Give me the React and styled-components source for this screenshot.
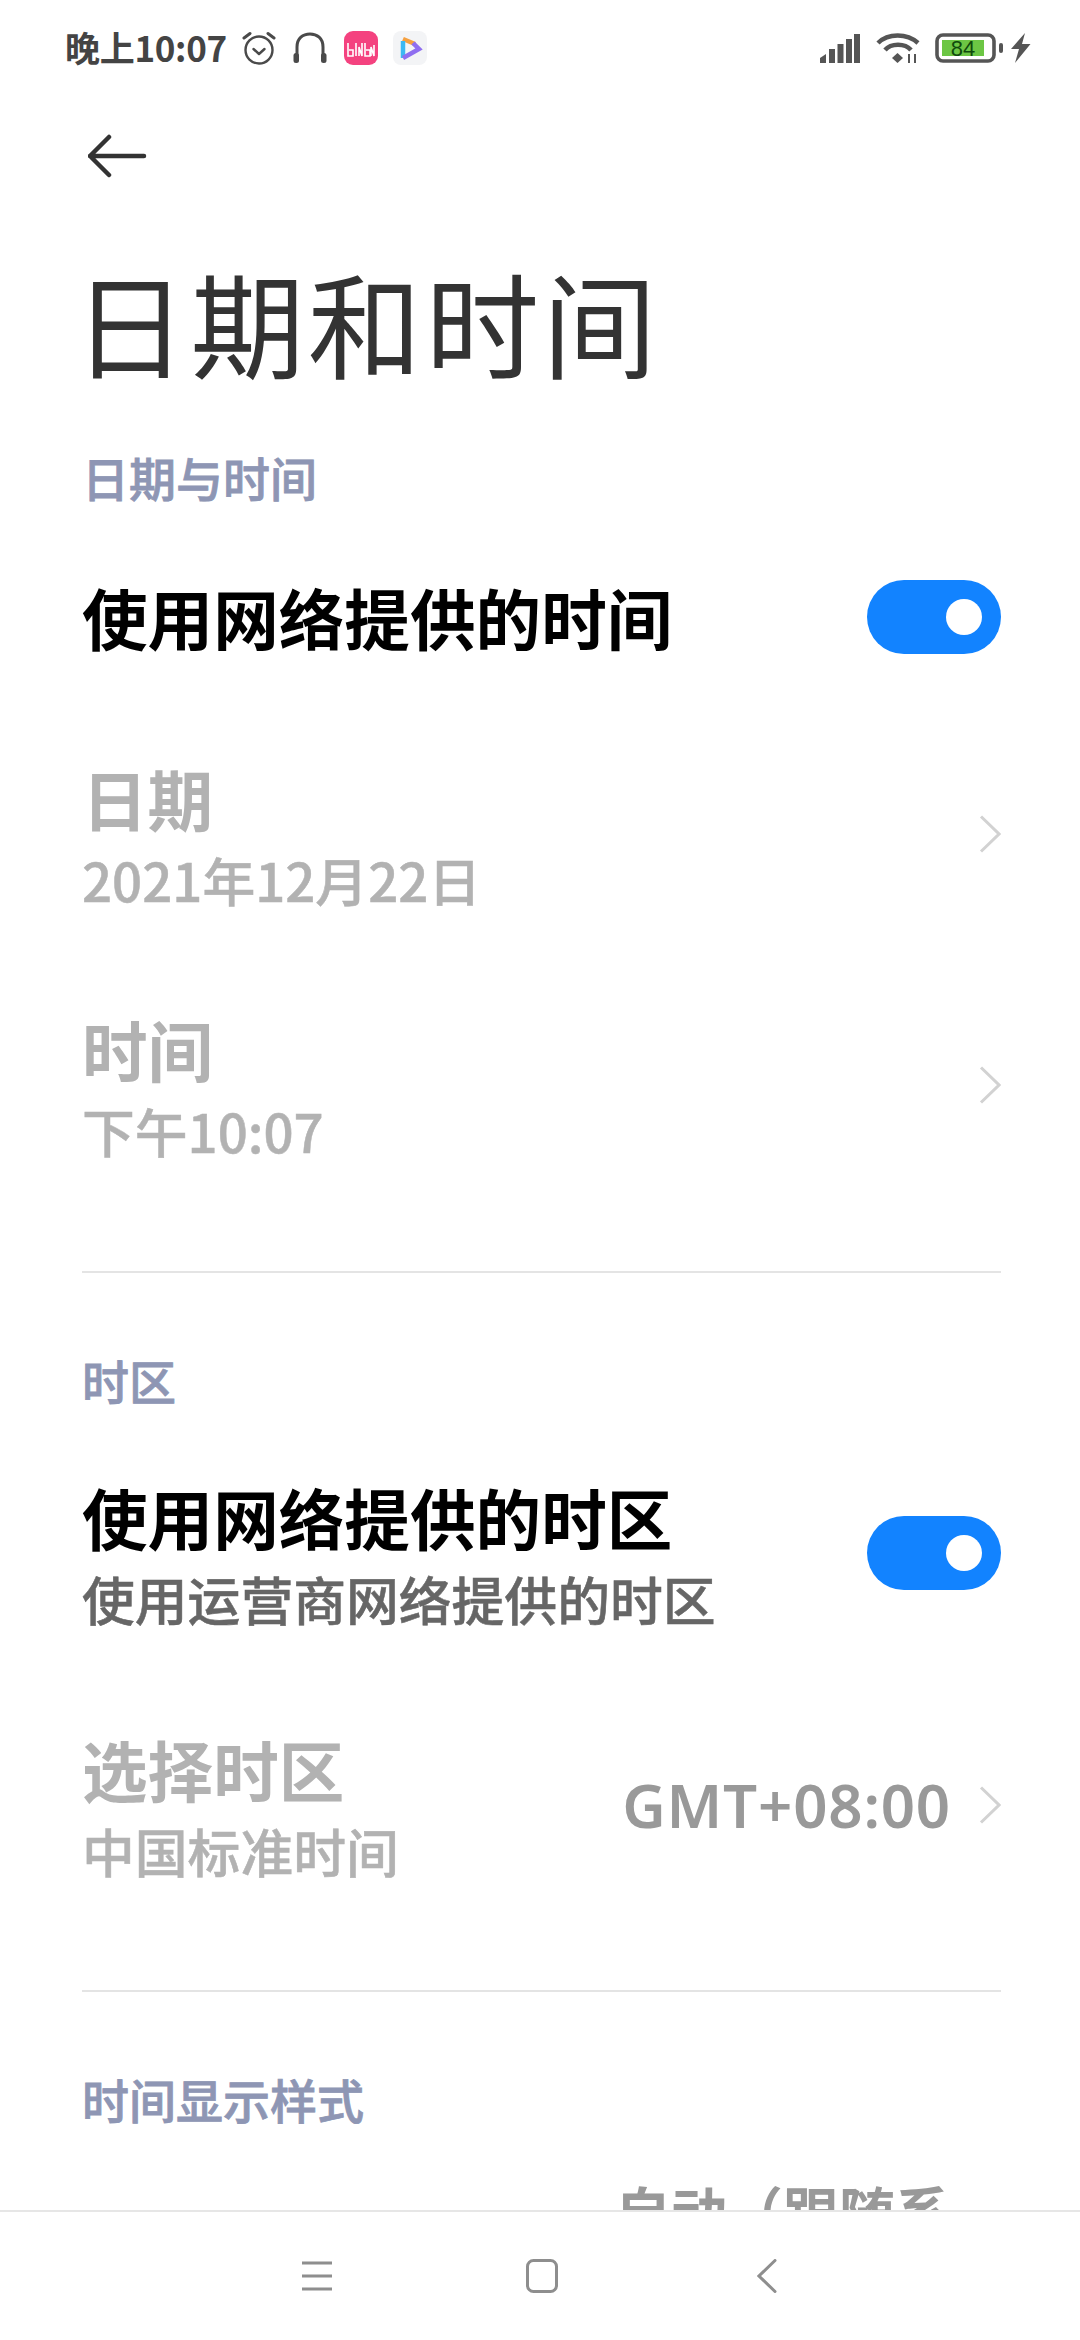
import React from "react";
import styled, { createGlobalStyle } from "styled-components";

const Global = createGlobalStyle`
  html, body { margin: 0; padding: 0; background: #fff; }
  body { font-family: "Noto Sans CJK SC", "Noto Sans", sans-serif; }
`;
const Phone = styled.div`
  width: 1080px; height: 2340px; display: flex; flex-direction: column; overflow: hidden; background: #fff;
`;
const StatusBar = styled.div`
  height: 96px; flex: none; display: flex; align-items: center; justify-content: space-between;
  padding: 0 49px 0 65px; box-sizing: border-box;
`;
const StatusGroup = styled.div`display: flex; align-items: center;`;
const Clock = styled.span`
  font-size: 35px; font-weight: 700; color: #444; letter-spacing: -0.3px; line-height: 40px; margin-right: 15px; position: relative; top: -1px;
`;
const StatusSvg = styled.svg`display: block; flex: none; margin-left: ${p => p.$gap || 0}px;`;
const Viewport = styled.div`flex: 1; min-height: 0; overflow: hidden; padding: 0 79px 0 82px;`;
const BackWrap = styled.div`height: 122px; display: flex; align-items: center; padding-left: 6px; padding-bottom: 2px; box-sizing: border-box;`;
const Title = styled.h1`
  margin: 28px 0 0 -9px; font-size: 114px; font-weight: 400; color: #333; line-height: 150px; letter-spacing: 3.4px;
`;
const SectionTitle = styled.div`
  font-size: 47px; line-height: 60px; color: #8e96b4; font-weight: 500; -webkit-text-stroke: 0.8px #8e96b4; margin-top: ${p => p.$top}px;
`;
const Row = styled.div`
  display: flex; align-items: center; justify-content: space-between;
  margin-top: ${p => p.$top}px; height: ${p => p.$h}px;
`;
const RowText = styled.div`display: flex; flex-direction: column;`;
const RowTitle = styled.div`
  font-size: 65.6px; line-height: 80px; font-weight: 700; color: ${p => p.$off ? "#b2b2b2" : "#000"};
`;
const RowSub = styled.div`
  font-size: 52.8px; line-height: 62px; font-weight: 500; -webkit-text-stroke: 0.5px ${p => p.$off ? "#b2b2b2" : "#666"};
  color: ${p => p.$off ? "#b2b2b2" : "#666"}; margin-top: 10px;
`;
const Switch = styled.div`
  width: 134px; height: 74px; border-radius: 37px; background: #1283ff; position: relative; flex: none;
  &::after { content: ""; position: absolute; width: 36px; height: 36px; border-radius: 50%; background: #fff; right: 19px; top: 19px; }
`;
const Right = styled.div`display: flex; align-items: center;`;
const Value = styled.div`
  font-family: "Noto Sans", sans-serif; font-size: 60px; font-weight: 600; color: #999; letter-spacing: 0.8px; margin-right: 28px; white-space: nowrap;
`;
const Chev = styled.svg`display: block; flex: none;`;
const Divider = styled.div`height: 2px; background: #e4e4e4; margin-top: ${p => p.$top}px;`;
const ClippedValue = styled.div`
  font-size: 56px; font-weight: 700; color: #999; line-height: 60px; text-align: right; padding-right: 50px; margin-top: 51px; white-space: nowrap;
`;
const NavBar = styled.div`
  height: 128px; flex: none; border-top: 2px solid #e6e6e6; background: #fff; display: flex; align-items: center; justify-content: center; padding-left: 3px;
`;
const NavSlot = styled.div`width: 225px; display: flex; justify-content: center;`;

const Chevron = () => (
  <Chev width="22" height="38" viewBox="0 0 22 38"><path d="M2 1.5 L20 19 L2 36.5" fill="none" stroke="#d2d2d2" strokeWidth="3" /></Chev>
);

export default function App() {
  return (
    <Phone>
      <Global />
      <StatusBar>
        <StatusGroup>
          <Clock>晚上10:07</Clock>
          <StatusSvg width="34" height="34" viewBox="0 0 34 34" fill="none" stroke="#4a4a4a" strokeWidth="2.4" strokeLinecap="round" strokeLinejoin="round">
            <circle cx="17" cy="19" r="13.5" /><path d="M11.5 18 L17 23 L22.5 18" /><path d="M2 7 L8 2.5 M32 7 L26 2.5" strokeWidth="3" />
          </StatusSvg>
          <StatusSvg $gap={17} width="34" height="32" viewBox="0 0 34 32" fill="none">
            <path d="M4 28 V15 C4 6 10 2 17 2 C24 2 30 6 30 15 V28" stroke="#4a4a4a" strokeWidth="3" />
            <rect x="0.5" y="21" width="5.5" height="10" rx="2.5" fill="#4a4a4a" /><rect x="28" y="21" width="5.5" height="10" rx="2.5" fill="#4a4a4a" />
          </StatusSvg>
          <StatusSvg $gap={17} width="34" height="34" viewBox="0 0 34 34">
            <rect width="34" height="34" rx="9" fill="#f4427f" />
            <path d="M4 12 V25 H9 V19 H5 M12 12 V25 M15 25 V16 L18 25 V12 M21 12 V25 H26 V19 H22 M27 25 V16 L30 25 V14" fill="none" stroke="#fff" strokeWidth="1.6" />
          </StatusSvg>
          <StatusSvg $gap={15} width="34" height="34" viewBox="0 0 34 34">
            <rect width="34" height="34" rx="8" fill="#f3f4f6" />
            <path d="M10 8 L22 13" stroke="#f5a040" strokeWidth="4.5" fill="none" />
            <path d="M10 10 V27" stroke="#3cb8f2" strokeWidth="4.5" fill="none" />
            <path d="M10 27 L26 18 L20 12" stroke="#8f6ef0" strokeWidth="4.5" fill="none" />
          </StatusSvg>
        </StatusGroup>
        <StatusGroup>
          <StatusSvg width="40" height="29" viewBox="0 0 40 29" fill="#555">
            <path d="M0 24 L6 20 V29 H0 Z" /><rect x="9" y="15" width="6" height="14" /><rect x="17.500" y="10" width="6" height="19" /><rect x="26" y="5" width="6" height="24" /><rect x="34" y="0" width="6" height="29" />
          </StatusSvg>
          <StatusSvg $gap={16} width="44" height="32" viewBox="0 0 44 32" fill="none" stroke="#555" strokeWidth="4.5">
            <path d="M2 11 C12 1 31 1 42 11" /><path d="M9 18 C15 11 29 11 35 18" />
            <path d="M21.500 21 L27 26 L21.500 31 L16 26 Z" fill="#555" stroke="none" />
            <path d="M33 22 V31 M39 22 V31" strokeWidth="2" />
          </StatusSvg>
          <StatusSvg $gap={15} width="68" height="30" viewBox="0 0 68 30">
            <rect x="2" y="2" width="57" height="26" rx="6" fill="none" stroke="#555" strokeWidth="3.6" />
            <rect x="7" y="7" width="42" height="16" fill="#6cc644" />
            <rect x="64" y="10" width="4" height="10" rx="2" fill="#555" />
            <text x="28" y="22.500" fontSize="22" textAnchor="middle" fill="#0f4a0c" fontFamily="Liberation Sans, sans-serif">84</text>
          </StatusSvg>
          <StatusSvg $gap={8} width="20" height="30" viewBox="0 0 20 30">
            <path d="M14 0 L0 16 L8 16 L4 30 L19.500 11 L11 11 Z" fill="#555" />
          </StatusSvg>
        </StatusGroup>
      </StatusBar>
      <Viewport>
        <BackWrap>
          <svg width="60" height="44" viewBox="0 0 60 44" fill="none" stroke="#333" strokeWidth="4.500" strokeLinecap="round" strokeLinejoin="round">
            <path d="M2 22 H56 M21 3 L2 22 L21 41" />
          </svg>
        </BackWrap>
        <Title>日期和时间</Title>
        <SectionTitle $top={51}>日期与时间</SectionTitle>
        <Row $top={60} $h={100}>
          <RowTitle>使用网络提供的时间</RowTitle>
          <Switch />
        </Row>
        <Row $top={91} $h={152}>
          <RowText><RowTitle $off>日期</RowTitle><RowSub $off>2021年12月22日</RowSub></RowText>
          <Chevron />
        </Row>
        <Row $top={99} $h={152}>
          <RowText><RowTitle $off>时间</RowTitle><RowSub $off>下午10:07</RowSub></RowText>
          <Chevron />
        </Row>
        <Divider $top={110} />
        <SectionTitle $top={77}>时区</SectionTitle>
        <Row $top={67} $h={152}>
          <RowText><RowTitle>使用网络提供的时区</RowTitle><RowSub>使用运营商网络提供的时区</RowSub></RowText>
          <Switch />
        </Row>
        <Row $top={100} $h={152}>
          <RowText><RowTitle $off>选择时区</RowTitle><RowSub $off>中国标准时间</RowSub></RowText>
          <Right><Value>GMT+08:00</Value><Chevron /></Right>
        </Row>
        <Divider $top={109} />
        <SectionTitle $top={77}>时间显示样式</SectionTitle>
        <ClippedValue>自动（跟随系</ClippedValue>
      </Viewport>
      <NavBar>
        <NavSlot>
          <svg width="32" height="30" viewBox="0 0 32 30" stroke="#8e8e8e" strokeWidth="3"><path d="M1 2 H31 M1 15 H31 M1 28 H31" /></svg>
        </NavSlot>
        <NavSlot>
          <svg width="32" height="34" viewBox="0 0 32 34" fill="none" stroke="#8e8e8e" strokeWidth="3"><rect x="1.500" y="1.500" width="29" height="31" rx="6" /></svg>
        </NavSlot>
        <NavSlot>
          <svg width="20" height="34" viewBox="0 0 20 34" fill="none" stroke="#8e8e8e" strokeWidth="3" strokeLinecap="round"><path d="M18 1.500 L2 17 L18 32.500" /></svg>
        </NavSlot>
      </NavBar>
    </Phone>
  );
}
